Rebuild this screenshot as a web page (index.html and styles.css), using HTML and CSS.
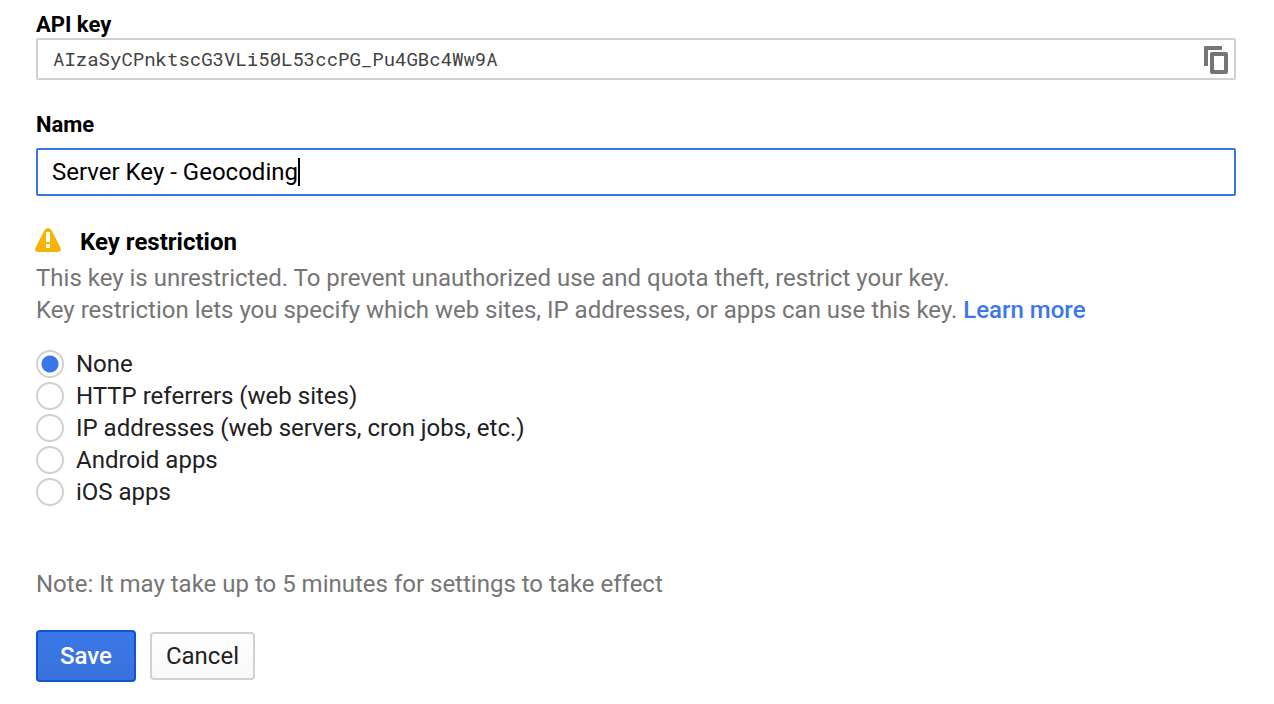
FILE: index.html
```html
<!DOCTYPE html>
<html lang="en">
<head>
<meta charset="utf-8">
<meta name="viewport" content="width=device-width, initial-scale=1">
<title>API key</title>
<link rel="stylesheet" href="styles.css">
</head>
<body>
<form class="key-form">
  <label class="field-label" for="api-key">API key</label>
  <div class="key-box">
    <input class="key-value" id="api-key" type="text" readonly value="AIzaSyCPnktscG3VLi50L53ccPG_Pu4GBc4Ww9A">
    <button class="copy-button" type="button" aria-label="Copy key">
      <svg class="copy-icon" viewBox="0 0 24 28" aria-hidden="true">
        <path fill="#757575" fill-rule="evenodd" d="M1 0H18V4H4V20H0V1Q0 0 1 0ZM8 6H22Q24 6 24 8V26Q24 28 22 28H8Q6 28 6 26V8Q6 6 8 6ZM10 10V24H20V10Z"/>
      </svg>
    </button>
  </div>

  <label class="field-label name-label" for="key-name">Name</label>
  <div class="name-box">
    <input class="name-input" id="key-name" type="text" value="Server Key - Geocoding">
    <span class="caret"></span>
  </div>

  <section class="restriction">
    <h2 class="restriction-title">
      <svg class="warning-icon" viewBox="0 0 26 28" aria-hidden="true">
        <path fill="#f4b400" d="M9.6 2Q13-2 16.4 2L25.4 19.5Q27 24 22.5 24H3.5Q-1 24 .6 19.5Z"/>
        <path fill="#fff" d="M11 4H15V14H11ZM11 16H15V20H11Z"/>
      </svg>
      Key restriction
    </h2>
    <p class="hint">This key is unrestricted. To prevent unauthorized use and quota theft, restrict your key.<br>
    Key restriction lets you specify which web sites, IP addresses, or apps can use this key. <a class="link" href="#">Learn more</a></p>
    <div class="options" role="radiogroup" aria-label="Key restriction">
      <label class="option"><input class="radio" type="radio" name="restriction" checked>None</label>
      <label class="option"><input class="radio" type="radio" name="restriction">HTTP referrers (web sites)</label>
      <label class="option"><input class="radio" type="radio" name="restriction">IP addresses (web servers, cron jobs, etc.)</label>
      <label class="option"><input class="radio" type="radio" name="restriction">Android apps</label>
      <label class="option"><input class="radio" type="radio" name="restriction">iOS apps</label>
    </div>
  </section>

  <p class="hint note">Note: It may take up to 5 minutes for settings to take effect</p>
  <div class="actions">
    <button class="button save" type="submit">Save</button>
    <button class="button cancel" type="button">Cancel</button>
  </div>
</form>
</body>
</html>
```
FILE: styles.css
```css
* {
  box-sizing: border-box;
}

body {
  margin: 0;
  background: #fff;
  color: #212121;
  font: 24px/32px Roboto, "Liberation Sans", sans-serif;
}

.key-form {
  padding: 12px 38px 20px 36px;
}

.field-label {
  display: block;
  color: #000;
  font-size: 22px;
  font-weight: 700;
  line-height: 26px;
}

.key-box {
  display: flex;
  align-items: center;
  height: 42px;
  padding: 0 6px 0 15px;
  border: 2px solid #d1d1d1;
  border-radius: 2px;
}

.key-value {
  flex: 1;
  min-width: 0;
  padding: 0;
  border: 0;
  outline: 0;
  background: none;
  color: #424242;
  font: 19px/24px "Roboto Mono", "DejaVu Sans Mono", monospace;
}

.copy-button {
  display: flex;
  padding: 2px 0 0;
  border: 0;
  background: none;
}

.copy-icon {
  width: 24px;
  height: 28px;
}

.name-label {
  margin: 32px 0 10px;
}

.name-box {
  position: relative;
}

.name-input {
  display: block;
  width: 100%;
  height: 48px;
  padding: 0 14px;
  border: 2px solid #3b78e7;
  border-radius: 2px;
  outline: 0;
  color: #000;
  font: inherit;
  caret-color: transparent;
}

.caret {
  position: absolute;
  top: 10px;
  left: 262px;
  width: 2px;
  height: 28px;
  background: #000;
}

.restriction-title {
  display: flex;
  align-items: center;
  gap: 19px;
  margin: 30px 0 4px -1px;
  color: #000;
  font-size: 24px;
  font-weight: 700;
  line-height: 32px;
}

.warning-icon {
  width: 26px;
  height: 28px;
}

.hint {
  margin: 0;
  color: #757575;
}

.link {
  color: #3b78e7;
  font-weight: 500;
  text-decoration: none;
}

.options {
  margin-top: 22px;
}

.option {
  display: flex;
  align-items: center;
  gap: 12px;
}

.radio {
  width: 28px;
  height: 28px;
  margin: 0;
  border: 2px solid #d1d1d1;
  border-radius: 50%;
  appearance: none;
}

.radio:checked {
  background: radial-gradient(circle, #3b78e7 8px, #fff 9px);
}

.note {
  margin-top: 60px;
}

.actions {
  display: flex;
  align-items: center;
  gap: 14px;
  margin-top: 30px;
}

.button {
  border: 2px solid;
  border-radius: 4px;
  font: inherit;
}

.save {
  padding: 8px 22px;
  border-color: #1155cc;
  background: linear-gradient(#3b78e7, #3872dc);
  color: #fff;
  font-weight: 500;
}

.cancel {
  padding: 6px 14px;
  border-color: #d1d1d1;
  background: linear-gradient(#fff, #f8f8f8);
  color: #212121;
}
```
